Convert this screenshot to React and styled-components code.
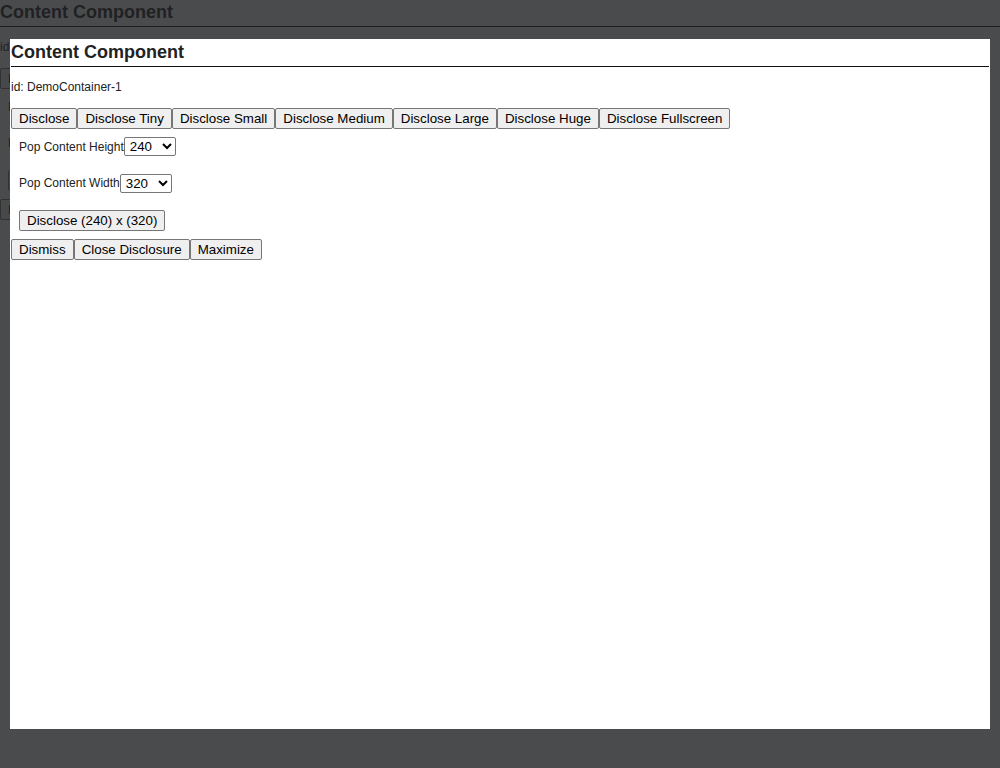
import styled, { createGlobalStyle } from "styled-components";

const GlobalStyle = createGlobalStyle`
  html, body {
    margin: 0;
    padding: 0;
    background: #ffffff;
    font-family: "Liberation Sans", Arial, Helvetica, sans-serif;
    color: #222222;
  }
`;

const Container = styled.div`
  display: flex;
  flex-direction: column;
  align-items: flex-start;
`;

const Title = styled.h2`
  align-self: stretch;
  margin: 0;
  padding: 2px 0 3px;
  font-size: 18px;
  line-height: 21px;
  font-weight: 700;
  border-bottom: 1px solid #111111;
`;

const IdLine = styled.p`
  margin: 13px 0 14px;
  font-size: 12px;
  line-height: 14px;
`;

const ButtonRow = styled.div`
  display: flex;
`;

const Button = styled.button`
  font-family: "Liberation Sans", Arial, Helvetica, sans-serif;
  font-size: 13.333px;
  line-height: 15px;
  height: 21px;
  padding: 1px 7px;
  margin: 0;
  color: #000000;
  background: #efefef;
  border: 1px solid #767676;
  border-radius: 2px;
  cursor: pointer;
`;

const Panel = styled.div`
  display: flex;
  flex-direction: column;
  align-items: flex-start;
  gap: 17.5px;
  padding: 8px;
`;

const Field = styled.label`
  display: flex;
  align-items: center;
  font-size: 12px;
  line-height: 14px;
`;

const Select = styled.select`
  font-family: "Liberation Sans", Arial, Helvetica, sans-serif;
  font-size: 13.333px;
  width: ${(p) => p.$width}px;
  height: 19px;
  padding: 0 0 0 1px;
  margin: 0;
  color: #000000;
  background: #ffffff;
  border: 1px solid #767676;
  border-radius: 2px;
`;

const Overlay = styled.div`
  position: fixed;
  inset: 0;
  background: rgba(32, 33, 36, 0.81);
`;

const Dialog = styled.div`
  position: fixed;
  top: 39px;
  bottom: 39px;
  left: 10px;
  right: 10px;
  padding: 1px;
  background: #ffffff;
`;

const sizeButtons = [
  "Disclose",
  "Disclose Tiny",
  "Disclose Small",
  "Disclose Medium",
  "Disclose Large",
  "Disclose Huge",
  "Disclose Fullscreen",
];

function DemoContent() {
  return (
    <Container>
      <Title>Content Component</Title>
      <IdLine>id: DemoContainer-1</IdLine>
      <ButtonRow>
        {sizeButtons.map((text) => (
          <Button key={text}>{text}</Button>
        ))}
      </ButtonRow>
      <Panel>
        <Field>
          Pop Content Height
          <Select defaultValue="240" $width={52}>
            <option>120</option>
            <option>240</option>
            <option>480</option>
          </Select>
        </Field>
        <Field>
          Pop Content Width
          <Select defaultValue="320" $width={52}>
            <option>160</option>
            <option>320</option>
            <option>640</option>
          </Select>
        </Field>
        <Button>Disclose (240) x (320)</Button>
      </Panel>
      <ButtonRow>
        <Button>Dismiss</Button>
        <Button>Close Disclosure</Button>
        <Button>Maximize</Button>
      </ButtonRow>
    </Container>
  );
}

export default function App() {
  return (
    <>
      <GlobalStyle />
      <DemoContent />
      <Overlay />
      <Dialog>
        <DemoContent />
      </Dialog>
    </>
  );
}
